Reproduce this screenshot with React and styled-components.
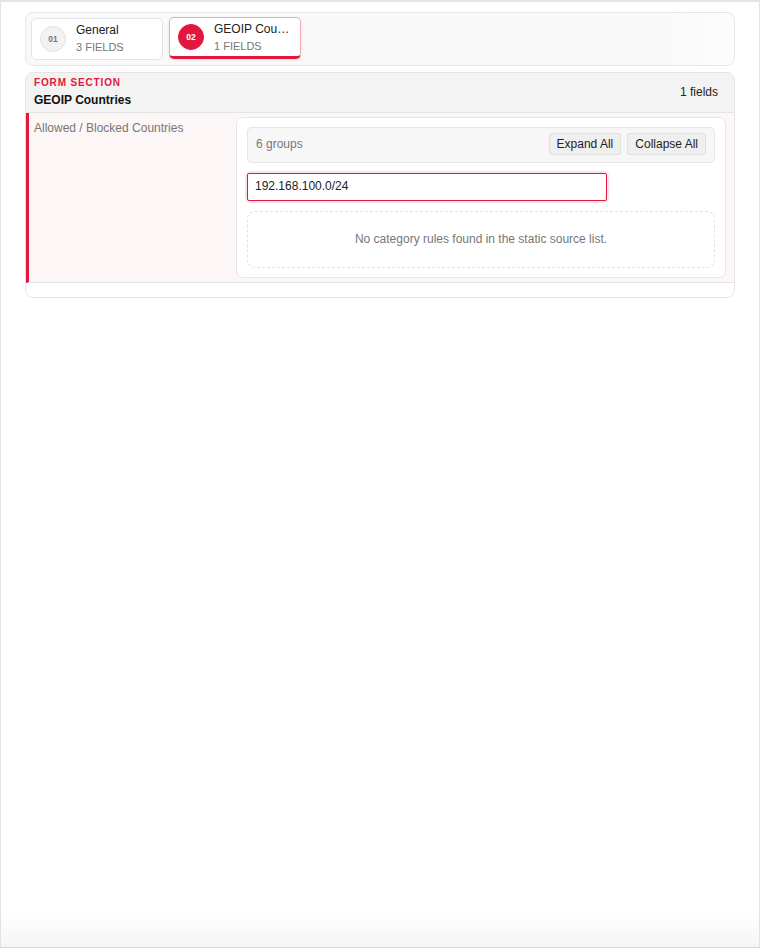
import React from 'react';
import styled, { createGlobalStyle } from 'styled-components';

const GlobalStyle = createGlobalStyle`
  html, body {
    margin: 0;
    padding: 0;
    background: #ffffff;
  }
  body {
    font-family: "Liberation Sans", Arial, sans-serif;
    color: #222;
  }
  * { box-sizing: border-box; }
`;

const Frame = styled.div`
  width: 760px;
  height: 948px;
  border-top: 2px solid #e4e4e4;
  border-left: 1px solid #e2e2e2;
  border-right: 1px solid #e2e2e2;
  border-bottom: 1px solid #d9d9d9;
  background: linear-gradient(to bottom, #ffffff calc(100% - 34px), #f5f5f5 100%);
  padding: 10px 24px 0 24px;
  display: flex;
  flex-direction: column;
  gap: 6px;
`;

const TabBar = styled.div`
  display: flex;
  gap: 6px;
  padding: 5px;
  border: 1px solid #e6e6e6;
  border-radius: 8px;
  background: linear-gradient(to right, #f9f9f9 90%, #fdfdfd 100%);
  height: 54px;
  align-items: flex-start;
`;

const Tab = styled.div`
  width: 132px;
  height: 42px;
  display: flex;
  align-items: center;
  gap: 10px;
  padding-left: 8px;
  background: #ffffff;
  border: 1px solid ${p => (p.$active ? '#f3a9b3' : '#e3e3e3')};
  border-bottom: ${p => (p.$active ? '3px solid #e3173e' : '1px solid #e3e3e3')};
  border-radius: 5px;
  margin-top: ${p => (p.$active ? '-1px' : '0')};
  box-shadow: ${p => (p.$active ? '0 1px 2px rgba(227, 23, 62, 0.15)' : 'none')};
`;

const Badge = styled.div`
  width: 26px;
  height: 26px;
  flex: 0 0 26px;
  border-radius: 50%;
  display: flex;
  align-items: center;
  justify-content: center;
  font-size: 8.5px;
  font-weight: bold;
  background: ${p => (p.$active ? '#e3173e' : '#f2f2f2')};
  color: ${p => (p.$active ? '#ffffff' : '#777')};
  border: 1px solid ${p => (p.$active ? '#e3173e' : '#e2e2e2')};
`;

const TabText = styled.div`
  display: flex;
  flex-direction: column;
  gap: 4px;
  min-width: 0;
  margin-top: ${p => (p.$active ? '0' : '-2px')};
`;

const TabLabel = styled.div`
  font-size: 12px;
  color: #222;
  white-space: nowrap;
  overflow: hidden;
  text-overflow: ellipsis;
  max-width: 78px;
`;

const TabMeta = styled.div`
  font-size: 11px;
  color: #777;
  text-transform: uppercase;
`;

const Card = styled.div`
  border: 1px solid #e4e4e4;
  border-radius: 8px;
  overflow: hidden;
  background: #ffffff;
`;

const CardHeader = styled.div`
  height: 40px;
  background: #f3f3f3;
  border-bottom: 1px solid #e4e4e4;
  display: flex;
  justify-content: space-between;
  align-items: center;
  padding: 0 16px 2px 8px;
`;

const HeaderTitles = styled.div`
  display: flex;
  flex-direction: column;
  gap: 5px;
`;

const Eyebrow = styled.div`
  font-size: 10px;
  font-weight: bold;
  color: #e3173e;
  letter-spacing: 0.85px;
  text-transform: uppercase;
`;

const SectionTitle = styled.div`
  font-size: 12px;
  font-weight: bold;
  color: #111;
`;

const FieldCount = styled.div`
  font-size: 12px;
  color: #222;
`;

const FieldRow = styled.div`
  display: grid;
  grid-template-columns: 202px 1fr;
  background: #fcf6f6;
  border-left: 3px solid #e3173e;
  border-bottom: 1px solid #e4e4e4;
  padding: 4px 8px 4px 5px;
`;

const FieldLabel = styled.div`
  font-size: 12px;
  color: #777;
  padding-top: 4px;
`;

const FieldBox = styled.div`
  background: #ffffff;
  border: 1px solid #e6e6e6;
  border-radius: 7px;
  padding: 9px 10px 9px 10px;
  display: flex;
  flex-direction: column;
  gap: 10px;
`;

const Toolbar = styled.div`
  height: 36px;
  display: flex;
  align-items: center;
  justify-content: space-between;
  background: #f7f7f7;
  border: 1px solid #e6e6e6;
  border-radius: 4px;
  padding: 0 8px 2px 8px;
`;

const GroupCount = styled.div`
  font-size: 12px;
  color: #777;
`;

const Actions = styled.div`
  display: flex;
  gap: 6px;
`;

const ToolButton = styled.button`
  font-family: "Liberation Sans", Arial, sans-serif;
  font-size: 12px;
  color: #222;
  background: #efefef;
  border: 1px solid #e2e2e2;
  border-radius: 3px;
  height: 22px;
  padding: 0 7px 1px;
  cursor: pointer;
`;

const InputWrap = styled.div`
  width: 360px;
  padding: 0;
  border-radius: 3px;
  box-shadow: 0 0 0 2px #fde3e7;
`;

const TextInput = styled.input`
  display: block;
  width: 100%;
  height: 28px;
  border: 1px solid #e3173e;
  border-radius: 2px;
  padding: 0 7px 2px;
  font-family: "Liberation Sans", Arial, sans-serif;
  font-size: 12px;
  color: #222;
  outline: none;
`;

const EmptyState = styled.div`
  height: 57px;
  border: 1px dashed #e2e2e2;
  border-radius: 8px;
  display: flex;
  align-items: center;
  justify-content: center;
  font-size: 12px;
  color: #777;
  padding-bottom: 2px;
`;

const CardFooter = styled.div`
  height: 14px;
`;

const tabs = [
  { num: '01', label: 'General', fields: 3 },
  { num: '02', label: 'GEOIP Countries', fields: 1, active: true },
];

export default function App() {
  return (
    <>
      <GlobalStyle />
      <Frame>
        <TabBar>
          {tabs.map(t => (
            <Tab key={t.num} $active={t.active}>
              <Badge $active={t.active}>{t.num}</Badge>
              <TabText $active={t.active}>
                <TabLabel>{t.label}</TabLabel>
                <TabMeta>{t.fields} fields</TabMeta>
              </TabText>
            </Tab>
          ))}
        </TabBar>
        <Card>
          <CardHeader>
            <HeaderTitles>
              <Eyebrow>Form Section</Eyebrow>
              <SectionTitle>GEOIP Countries</SectionTitle>
            </HeaderTitles>
            <FieldCount>1 fields</FieldCount>
          </CardHeader>
          <FieldRow>
            <FieldLabel>Allowed / Blocked Countries</FieldLabel>
            <FieldBox>
              <Toolbar>
                <GroupCount>6 groups</GroupCount>
                <Actions>
                  <ToolButton>Expand All</ToolButton>
                  <ToolButton>Collapse All</ToolButton>
                </Actions>
              </Toolbar>
              <InputWrap>
                <TextInput defaultValue="192.168.100.0/24" />
              </InputWrap>
              <EmptyState>No category rules found in the static source list.</EmptyState>
            </FieldBox>
          </FieldRow>
          <CardFooter />
        </Card>
      </Frame>
    </>
  );
}
